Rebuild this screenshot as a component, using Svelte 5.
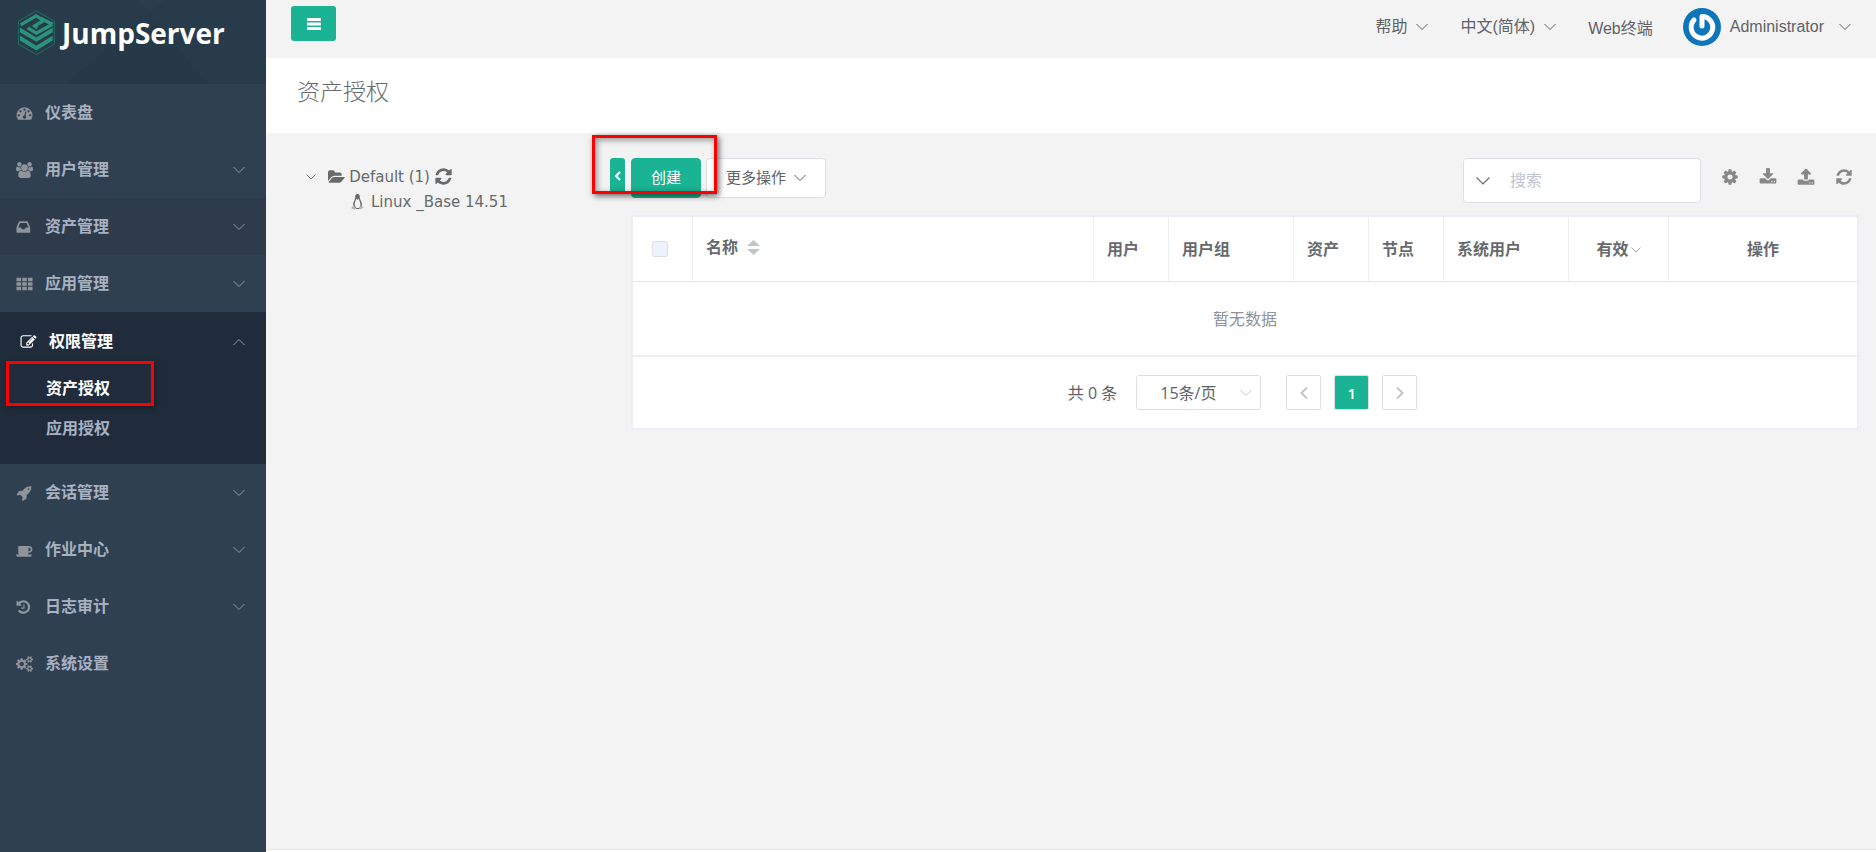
<script lang="ts">
  interface MenuItem {
    label: string;
    icon: string;
    expandable?: boolean;
    hover?: boolean;
    children?: string[];
  }

  const icons: Record<string, { w: number; d: string }> = {
    dashboard: { w: 1792, d: "M384 1152q0-53-37.5-90.5t-90.5-37.5-90.5 37.5-37.5 90.5 37.5 90.5 90.5 37.5 90.5-37.5 37.5-90.5zm192-448q0-53-37.5-90.5t-90.5-37.5-90.5 37.5-37.5 90.5 37.5 90.5 90.5 37.5 90.5-37.5 37.5-90.5zm428 481l101-382q6-26-7.5-48.5t-38.5-29.5-48 6.5-30 39.5l-101 382q-60 5-107 43.5t-63 98.5q-20 77 20 146t117 89 146-20 89-117q16-60-6-117t-72-91zm660-33q0-53-37.5-90.5t-90.5-37.5-90.5 37.5-37.5 90.5 37.5 90.5 90.5 37.5 90.5-37.5 37.5-90.5zm-640-640q0-53-37.5-90.5t-90.5-37.5-90.5 37.5-37.5 90.5 37.5 90.5 90.5 37.5 90.5-37.5 37.5-90.5zm448 192q0-53-37.5-90.5t-90.5-37.5-90.5 37.5-37.5 90.5 37.5 90.5 90.5 37.5 90.5-37.5 37.5-90.5zm320 448q0 261-141 483-19 29-54 29h-1402q-35 0-54-29-141-221-141-483 0-182 71-348t191-286 286-191 348-71 348 71 286 191 191 286 71 348z" },
    users: { w: 1920, d: "M593 896q-162 5-265 128h-134q-82 0-138-40.5t-56-118.5q0-353 124-353 6 0 43.5 21t97.5 42.5 119 21.5q67 0 133-23-5 37-5 66 0 139 81 256zm1071 637q0 120-73 189.5t-194 69.5h-874q-121 0-194-69.5t-73-189.5q0-53 3.5-103.5t14-109 26.5-108.5 43-97.5 62-81 85.5-53.5 111.5-20q10 0 43 21.5t73 48 107 48 135 21.5 135-21.5 107-48 73-48 43-21.5q61 0 111.5 20t85.5 53.5 62 81 43 97.5 26.5 108.5 14 109 3.5 103.5zm-1024-1277q0 106-75 181t-181 75-181-75-75-181 75-181 181-75 181 75 75 181zm704 384q0 159-112.5 271.5t-271.5 112.5-271.5-112.5-112.5-271.5 112.5-271.5 271.5-112.5 271.5 112.5 112.5 271.5zm576 225q0 78-56 118.5t-138 40.5h-134q-103-123-265-128 81-117 81-256 0-29-5-66 66 23 133 23 59 0 119-21.5t97.5-42.5 43.5-21q124 0 124 353zm-128-609q0 106-75 181t-181 75-181-75-75-181 75-181 181-75 181 75 75 181z" },
    inbox: { w: 1792, d: "M1023 960h316q-1-3-2.5-8t-2.5-8l-212-496h-708l-212 496q-1 2-2.5 8t-2.5 8h316l95 192h320zm513 30v482q0 26-19 45t-45 19h-1408q-26 0-45-19t-19-45v-482q0-62 25-123l238-552q10-25 36.5-42t52.5-17h832q26 0 52.5 17t36.5 42l238 552q25 61 25 123z" },
    grid: { w: 1792, d: "M0 192h512v384H0zM640 192h512v384H640zM1280 192h512v384h-512zM0 704h512v384H0zM640 704h512v384H640zM1280 704h512v384h-512zM0 1216h512v384H0zM640 1216h512v384H640zM1280 1216h512v384h-512z" },
    edit: { w: 1792, d: "M888 1184l116-116-152-152-116 116v56h96v96h56zm440-720q-16-16-33 1l-350 350q-17 17-1 33t33-1l350-350q17-17 1-33zm80 594v190q0 119-84.5 203.5t-203.5 84.5h-832q-119 0-203.5-84.5t-84.5-203.5v-832q0-119 84.5-203.5t203.5-84.5h832q63 0 117 25 15 7 18 23 3 17-9 29l-49 49q-14 14-32 8-23-6-45-6h-832q-66 0-113 47t-47 113v832q0 66 47 113t113 47h832q66 0 113-47t47-113v-126q0-13 9-22l64-64q15-15 35-7t20 29zm-96-738l288 288-672 672h-288v-288zm444 132l-92 92-288-288 92-92q28-28 68-28t68 28l152 152q28 28 28 68t-28 68z" },
    rocket: { w: 1792, d: "M1440 448q0-40-28-68t-68-28-68 28-28 68 28 68 68 28 68-28 28-68zm224-288q0 249-75.5 430.5t-253.5 360.5q-81 80-195 176l-20 379q-2 16-16 26l-384 224q-7 4-16 4-12 0-23-9l-64-64q-13-14-8-32l85-276-281-281-276 85q-3 1-9 1-14 0-23-9l-64-64q-17-19-5-39l224-384q10-14 26-16l379-20q96-114 176-195 188-187 358-258t431-71q14 0 24 9.5t10 22.5z" },
    coffee: { w: 1920, d: "M1664 832q0-80-56-136t-136-56h-64v384h64q80 0 136-56t56-136zm-1664 576h1792q0 106-75 181t-181 75h-1280q-106 0-181-75t-75-181zm1856-576q0 159-112.5 271.5t-271.5 112.5h-64v32q0 92-66 158t-158 66h-704q-92 0-158-66t-66-158v-736q0-26 19-45t45-19h1152q159 0 271.5 112.5t112.5 271.5z" },
    history: { w: 1792, d: "M1536 896q0 156-61 298t-164 245-245 164-298 61q-172 0-327-72.5t-264-204.5q-7-10-6.5-22.5t8.5-20.5l137-138q10-9 25-9 16 2 23 12 73 95 179 147t225 52q104 0 198.5-40.5t163.5-109.5 109.5-163.5 40.5-198.5-40.5-198.5-109.5-163.5-163.5-109.5-198.5-40.5q-98 0-188 35.5t-160 101.5l137 138q31 30 14 69-17 40-59 40h-448q-26 0-45-19t-19-45v-448q0-42 40-59 39-17 69 14l130 129q107-101 244.5-156.5t284.5-55.5q156 0 298 61t245 164 164 245 61 298zm-640-288v448q0 14-9 23t-23 9h-320q-14 0-23-9t-9-23v-64q0-14 9-23t23-9h224v-352q0-14 9-23t23-9h64q14 0 23 9t9 23z" },
    cogs: { w: 1920, d: "M896 896q0-106-75-181t-181-75-181 75-75 181 75 181 181 75 181-75 75-181zm768 512q0-52-38-90t-90-38-90 38-38 90q0 53 37.5 90.5t90.5 37.5 90.5-37.5 37.5-90.5zm0-1024q0-52-38-90t-90-38-90 38-38 90q0 53 37.5 90.5t90.5 37.5 90.5-37.5 37.5-90.5zm-384 421v185q0 10-7 19.5t-16 10.5l-155 24q-11 35-32 76 34 48 90 115 7 10 7 20 0 12-7 19-23 30-82.5 89.5t-78.5 59.5q-11 0-21-7l-115-90q-37 19-77 31-11 108-23 155-7 24-30 24h-186q-11 0-20-7.5t-10-17.5l-23-153q-34-10-75-31l-118 89q-7 7-20 7-11 0-21-8-144-133-144-160 0-9 7-19 10-14 41-53t47-61q-23-44-35-82l-152-24q-10-1-17-9.5t-7-19.5v-185q0-10 7-19.5t16-10.5l155-24q11-35 32-76-34-48-90-115-7-11-7-20 0-12 7-20 22-30 82-89t79-59q11 0 21 7l115 90q34-18 77-32 11-108 23-154 7-24 30-24h186q11 0 20 7.5t10 17.5l23 153q34 10 75 31l118-89q8-7 20-7 11 0 21 8 144 133 144 160 0 9-7 19-12 16-42 54t-45 60q23 48 34 82l152 23q10 2 17 10.5t7 19.5zm640 533v140q0 16-149 31-12 27-30 52 51 113 51 138 0 4-4 7-122 71-124 71-8 0-46-47t-52-68q-20 2-30 2t-30-2q-14 21-52 68t-46 47q-2 0-124-71-4-3-4-7 0-25 51-138-18-25-30-52-149-15-149-31v-140q0-16 149-31 13-29 30-52-51-113-51-138 0-4 4-7 4-2 35-20t59-34 30-16q8 0 46 46.5t52 67.5q20-2 30-2t30 2q51-71 92-112l6-2q4 0 124 70 4 3 4 7 0 25-51 138 17 23 30 52 149 15 149 31zm0-1024v140q0 16-149 31-12 27-30 52 51 113 51 138 0 4-4 7-122 71-124 71-8 0-46-47t-52-68q-20 2-30 2t-30-2q-14 21-52 68t-46 47q-2 0-124-71-4-3-4-7 0-25 51-138-18-25-30-52-149-15-149-31v-140q0-16 149-31 13-29 30-52-51-113-51-138 0-4 4-7 4-2 35-20t59-34 30-16q8 0 46 46.5t52 67.5q20-2 30-2t30 2q51-71 92-112l6-2q4 0 124 70 4 3 4 7 0 25-51 138 17 23 30 52 149 15 149 31z" },
    folder: { w: 1920, d: "M1879 952q0 31-31 66l-336 396q-43 51-120.5 86.5t-143.5 35.5h-1088q-34 0-60.5-13t-26.5-43q0-31 31-66l336-396q43-51 120.5-86.5t143.5-35.5h1088q34 0 60.5 13t26.5 43zm-343-344v160h-832q-94 0-197 47.5t-164 119.5l-337 396-5 6q0-4-.5-12.5t-.5-12.5v-960q0-92 66-158t158-66h320q92 0 158 66t66 158v32h544q92 0 158 66t66 158z" },
    refresh: { w: 1792, d: "M1639 1056q0 5-1 7-64 268-268 434.5t-478 166.5q-146 0-282.5-55t-243.5-157l-129 129q-19 19-45 19t-45-19-19-45v-448q0-26 19-45t45-19h448q26 0 45 19t19 45-19 45l-137 137q71 66 161 102t187 36q134 0 250-65t186-179q11-17 53-117 8-23 30-23h192q13 0 22.5 9.5t9.5 22.5zm25-800v448q0 26-19 45t-45 19h-448q-26 0-45-19t-19-45 19-45l138-138q-148-137-349-137-134 0-250 65t-186 179q-11 17-53 117-8 23-30 23h-199q-13 0-22.5-9.5t-9.5-22.5v-7q65-268 270-434.5t480-166.5q146 0 284 55.5t245 156.5l130-129q19-19 45-19t45 19 19 45z" },
    cog: { w: 1792, d: "M1152 896q0-106-75-181t-181-75-181 75-75 181 75 181 181 75 181-75 75-181zm512-109v222q0 12-8 23t-20 13l-185 28q-19 54-39 91 35 50 107 138 10 12 10 25t-9 23q-27 37-99 108t-94 71q-12 0-26-9l-138-108q-44 23-91 38-16 136-29 186-7 28-36 28h-222q-14 0-24.5-8.5t-11.5-21.5l-28-184q-49-16-90-37l-141 107q-10 9-25 9-14 0-25-11-126-114-165-168-7-10-7-23 0-12 8-23 15-21 51-66.5t54-70.5q-27-50-41-99l-183-27q-13-2-21-12.5t-8-23.5v-222q0-12 8-23t19-13l186-28q14-46 39-92-40-57-107-138-10-12-10-24 0-10 9-23 26-36 98.5-107.5t94.5-71.5q13 0 26 10l138 107q44-23 91-38 16-136 29-186 7-28 36-28h222q14 0 24.5 8.5t11.5 21.5l28 184q49 16 90 37l142-107q9-9 24-9 13 0 25 10 129 119 165 170 7 8 7 22 0 12-8 23-15 21-51 66.5t-54 70.5q26 50 41 98l183 28q13 2 21 12.5t8 23.5z" },
    download: { w: 1792, d: "M1344 1344q0-26-19-45t-45-19-45 19-19 45 19 45 45 19 45-19 19-45zm256 0q0-26-19-45t-45-19-45 19-19 45 19 45 45 19 45-19 19-45zm128-224v320q0 40-28 68t-68 28h-1472q-40 0-68-28t-28-68v-320q0-40 28-68t68-28h465l135 136q58 56 136 56t136-56l136-136h464q40 0 68 28t28 68zm-325-569q17 41-14 70l-448 448q-18 19-45 19t-45-19l-448-448q-31-29-14-70 17-39 59-39h256v-448q0-26 19-45t45-19h256q26 0 45 19t19 45v448h256q42 0 59 39z" },
    upload: { w: 1792, d: "M1344 1472q0-26-19-45t-45-19-45 19-19 45 19 45 45 19 45-19 19-45zm256 0q0-26-19-45t-45-19-45 19-19 45 19 45 45 19 45-19 19-45zm128-224v320q0 40-28 68t-68 28h-1472q-40 0-68-28t-28-68v-320q0-40 28-68t68-28h427q21 56 70.5 92t110.5 36h256q61 0 110.5-36t70.5-92h427q40 0 68 28t28 68zm-325-648q-17 40-59 40h-256v448q0 26-19 45t-45 19h-256q-26 0-45-19t-19-45v-448h-256q-42 0-59-40-17-39 14-69l448-448q18-19 45-19t45 19l448 448q31 30 14 69z" },
  };

  const menu: MenuItem[] = [
    { label: "仪表盘", icon: "dashboard" },
    { label: "用户管理", icon: "users", expandable: true },
    { label: "资产管理", icon: "inbox", expandable: true, hover: true },
    { label: "应用管理", icon: "grid", expandable: true },
    { label: "权限管理", icon: "edit", expandable: true, children: ["资产授权", "应用授权"] },
    { label: "会话管理", icon: "rocket", expandable: true },
    { label: "作业中心", icon: "coffee", expandable: true },
    { label: "日志审计", icon: "history", expandable: true },
    { label: "系统设置", icon: "cogs" },
  ];

  const tools = [
    { icon: "cog", label: "设置" },
    { icon: "download", label: "导出" },
    { icon: "upload", label: "导入" },
    { icon: "refresh", label: "刷新" },
  ];

  let activeChild = $state("资产授权");
  let search = $state("");
  let pageSize = $state(15);
</script>

{#snippet icon(name: string)}
  <svg class="icon {name}" viewBox="0 0 {icons[name].w} 1792" aria-hidden="true"><path d={icons[name].d} /></svg>
{/snippet}

{#snippet chevron(dir: string)}
  <svg class="chevron {dir}" viewBox="0 0 12 12" aria-hidden="true"><path d="M.5 3L6 8.500 11.500 3" /></svg>
{/snippet}

<div class="app">
  <nav class="sidebar">
    <div class="logo">
      <svg class="logo-mark" viewBox="54 30 111 134" aria-hidden="true">
        <path class="hex" d="M109 32l54 31v69l-54 31-54-31V63z" />
        <path class="fill" d="M60 107l49 30 49-30v14l-49 30-49-30zM60 82l49 30 49-30v14l-49 29-49-29z" />
        <path class="line" d="M62 74l46-27 24 14-28 16 8 6M156 73l-47 26-26-16M122 54l36 19" />
      </svg>
      <span class="logo-text">JumpServer</span>
    </div>
    <ul class="menu">
      {#each menu as item}
        <li class:open={item.children} class:hover={item.hover}>
          <a class="menu-item" href="#menu">
            {@render icon(item.icon)}
            <span class="menu-label">{item.label}</span>
            {#if item.expandable}
              {@render chevron(item.children ? "up" : "down")}
            {/if}
          </a>
          {#if item.children}
            <ul class="submenu">
              {#each item.children as child}
                <li>
                  <a href="#sub" class:active={child === activeChild} onclick={() => (activeChild = child)}>{child}</a>
                </li>
              {/each}
            </ul>
          {/if}
        </li>
      {/each}
    </ul>
  </nav>

  <div class="page">
    <header class="topbar">
      <button class="hamburger" aria-label="菜单">
        <svg viewBox="0 0 14 12" aria-hidden="true"><path d="M0 0h14v3H0zM0 4.500h14v3H0zM0 9h14v3H0z" /></svg>
      </button>
      <div class="nav">
        <button class="nav-item">帮助 {@render chevron("down")}</button>
        <button class="nav-item">中文(简体) {@render chevron("down")}</button>
        <a class="nav-item terminal" href="#terminal">Web终端</a>
        <button class="nav-item user">
          <svg class="avatar" viewBox="0 0 38 38" aria-hidden="true">
            <circle cx="19" cy="19" r="19" />
            <path d="M19 18V8.500a10.800 10.800 0 1 1-8 3.500" />
          </svg>
          <span class="user-name">Administrator</span>
          {@render chevron("down")}
        </button>
      </div>
    </header>

    <div class="heading"><h1>资产授权</h1></div>

    <div class="content">
      <aside class="tree">
        <div class="node">
          {@render chevron("down")}
          {@render icon("folder")}
          <span>Default (1)</span>
          {@render icon("refresh")}
        </div>
        <div class="node leaf">
          <svg class="linux" viewBox="0 0 13 16" aria-hidden="true">
            <path class="ink" d="M6.500 0C4.500 0 4 1.500 4.200 3.500 4.300 5.500 2 8 2 11l1 1.500L5.500 15h3l2-2.500.6-1.500c0-3-2.300-5-2.300-7.500C8.900 1.500 8.500 0 6.500 0z" />
            <path class="belly" d="M5.200 4.500L6.500 6l1.300-1.500C8 6.500 9.700 8.500 9.500 11.500L8 14H5.500L3.600 11C3.600 8.500 5 6.500 5.200 4.500z" />
            <path class="feet" d="M.7 13l2-1.800L5 14.500l-1 1L.7 15zM12.300 13l-2-1.800L8.300 14l.5 1.500 3.500-1.500z" />
          </svg>
          <span>Linux _Base 14.51</span>
        </div>
      </aside>

      <main class="main">
        <button class="collapse" aria-label="收起">
          <svg viewBox="0 0 6 10" aria-hidden="true"><path d="M5 1L1 5l4 4" /></svg>
        </button>
        <div class="list">
          <div class="toolbar">
            <div class="actions">
              <button class="btn primary">创建</button>
              <button class="btn">更多操作 {@render chevron("down")}</button>
            </div>
            <div class="search">
              {@render chevron("down")}
              <input type="text" placeholder="搜索" aria-label="搜索" bind:value={search} />
            </div>
            <div class="tools">
              {#each tools as tool}
                <button class="tool" aria-label={tool.label}>{@render icon(tool.icon)}</button>
              {/each}
            </div>
          </div>

          <div class="card">
            <table>
              <thead>
                <tr>
                  <th class="w-check"><input type="checkbox" aria-label="全选" /></th>
                  <th>
                    <span class="sortable">
                      名称
                      <svg class="sort" viewBox="0 0 13 16" aria-hidden="true"><path d="M6.500 0L13 6H0zM0 9h13l-6.500 6z" /></svg>
                    </span>
                  </th>
                  <th class="w-sm">用户</th>
                  <th class="w-md">用户组</th>
                  <th class="w-sm">资产</th>
                  <th class="w-sm">节点</th>
                  <th class="w-md">系统用户</th>
                  <th class="w-valid">有效{@render chevron("down")}</th>
                  <th class="w-action">操作</th>
                </tr>
              </thead>
              <tbody>
                <tr><td colspan="9">暂无数据</td></tr>
              </tbody>
            </table>

            <div class="pagination">
              <span class="total">共 0 条</span>
              <div class="page-size">
                <select aria-label="每页条数" bind:value={pageSize}>
                  <option value={15}>15条/页</option>
                  <option value={30}>30条/页</option>
                  <option value={50}>50条/页</option>
                </select>
                {@render chevron("down")}
              </div>
              <div class="pager">
                <button class="pager-btn" aria-label="上一页">{@render chevron("left")}</button>
                <button class="pager-btn current">1</button>
                <button class="pager-btn" aria-label="下一页">{@render chevron("right")}</button>
              </div>
            </div>
          </div>
        </div>
        <div class="highlight"></div>
      </main>
    </div>

    <footer class="footer"></footer>
  </div>
</div>

<style>
  :global(body) {
    margin: 0;
    background: #f3f3f3;
    color: #676a6c;
    font-family: "Liberation Sans", "Noto Sans CJK SC", sans-serif;
    font-size: 16px;
    line-height: 24px;
  }

  *,
  *::after {
    box-sizing: border-box;
  }

  ul,
  h1 {
    margin: 0;
    padding: 0;
    list-style: none;
  }

  a {
    color: inherit;
    text-decoration: none;
  }

  button,
  input,
  select {
    margin: 0;
    padding: 0;
    border: none;
    background: none;
    color: inherit;
    font: inherit;
  }

  button {
    cursor: pointer;
  }

  .icon {
    height: 16px;
    fill: currentColor;
    flex: none;
  }

  .chevron {
    width: 12px;
    height: 12px;
    fill: none;
    stroke: currentColor;
    stroke-width: 1;
    flex: none;
  }

  .chevron.up {
    transform: rotate(180deg);
  }

  .chevron.left {
    transform: rotate(90deg);
  }

  .chevron.right {
    transform: rotate(-90deg);
  }

  .app {
    display: flex;
    min-height: 100vh;
  }

  /* sidebar */
  .sidebar {
    width: 266px;
    flex: none;
    background: #2f4050;
    color: #a7b1c2;
  }

  .logo {
    display: flex;
    align-items: flex-start;
    gap: 7px;
    height: 84px;
    padding: 10px 18px;
    background:
      linear-gradient(50deg, transparent 62%, rgba(255, 255, 255, 0.01) 62%),
      linear-gradient(140deg, rgba(255, 255, 255, 0.01) 45%, transparent 45%),
      #263949;
  }

  .logo-mark {
    width: 37px;
    height: 45px;
    flex: none;
  }

  .logo-mark .hex {
    fill: none;
    stroke: #1f6f68;
    stroke-width: 3;
  }

  .logo-mark .fill {
    fill: #2a947b;
  }

  .logo-mark .line {
    fill: none;
    stroke: #2a947b;
    stroke-width: 10;
  }

  .logo-text {
    color: #fff;
    font-family: "Open Sans", sans-serif;
    font-size: 28px;
    font-weight: 700;
    line-height: 46px;
  }

  .menu-item {
    display: flex;
    align-items: center;
    height: 57px;
    padding: 0 21px 0 16px;
    font-weight: 600;
  }

  .menu-item .icon {
    width: 17px;
    height: 16px;
    margin-right: 12px;
    color: #8f949b;
  }

  .menu-item .chevron {
    color: #8f99a6;
  }

  .menu-label {
    flex: 1;
  }

  .hover {
    background: #2d3b4a;
  }

  .open {
    padding: 1px 0 17px;
    background: #202c3b;
  }

  .open .menu-item {
    padding-left: 20px;
    color: #fff;
  }

  .open .icon {
    color: #fff;
  }

  .submenu {
    display: grid;
    gap: 3px;
  }

  .submenu a {
    position: relative;
    display: block;
    padding-left: 46px;
    font-weight: 600;
    line-height: 37px;
  }

  .submenu .active {
    color: #fff;
  }

  .submenu .active::after {
    content: "";
    position: absolute;
    top: -9px;
    left: 6px;
    width: 148px;
    height: 45px;
    border: 3px solid #fb0000;
    box-shadow: 2px 2px 6px rgba(0, 0, 0, 0.3);
  }

  /* top bar */
  .page {
    display: flex;
    flex: 1;
    flex-direction: column;
    min-width: 0;
  }

  .topbar {
    display: flex;
    align-items: flex-start;
    justify-content: space-between;
    height: 58px;
    padding: 6px 25px;
  }

  .hamburger {
    display: grid;
    place-items: center;
    width: 45px;
    height: 35px;
    border-radius: 3px;
    background: #1ab394;
  }

  .hamburger svg {
    width: 14px;
    height: 12px;
    fill: #fff;
  }

  .nav {
    display: flex;
    align-items: center;
    gap: 32px;
    height: 42px;
    color: #606266;
  }

  .nav-item {
    display: flex;
    align-items: center;
    gap: 9px;
  }

  .terminal {
    padding-top: 3px;
  }

  .user-name {
    margin-right: 6px;
  }

  .user {
    margin-left: -2px;
  }

  .avatar {
    width: 38px;
    height: 38px;
  }

  .avatar circle {
    fill: #0d76bb;
  }

  .avatar path {
    fill: none;
    stroke: #fff;
    stroke-width: 5;
    stroke-linecap: round;
    stroke-linejoin: round;
  }

  .heading {
    padding: 16px 31px 23px;
    background: #fff;
  }

  h1 {
    font-size: 23px;
    font-weight: 300;
    line-height: 36px;
  }

  /* asset tree */
  .content {
    display: flex;
    flex: 1;
    align-items: flex-start;
    padding: 25px 17px 25px 40px;
  }

  .tree {
    width: 304px;
    flex: none;
    padding-top: 6px;
    font-family: "DejaVu Sans", sans-serif;
    font-size: 15px;
  }

  .node {
    display: flex;
    align-items: center;
    gap: 4px;
    height: 25px;
  }

  .node .chevron {
    width: 10px;
    margin-right: 8px;
  }

  .node .refresh {
    width: 19px;
    height: 19px;
  }

  .leaf {
    padding-left: 45px;
    gap: 7px;
  }

  .linux {
    width: 13px;
    height: 16px;
  }

  .linux .ink {
    fill: #676a6c;
  }

  .linux .belly {
    fill: #f3f3f3;
  }

  .linux .feet {
    fill: #b4b6b8;
  }

  /* list */
  .main {
    position: relative;
    display: flex;
    flex: 1;
    align-items: flex-start;
    gap: 6px;
    min-width: 0;
  }

  .collapse {
    display: grid;
    place-items: center;
    width: 15px;
    height: 35px;
    border-radius: 3px;
    background: #1ab394;
  }

  .collapse svg {
    width: 6px;
    height: 10px;
    fill: none;
    stroke: #fff;
    stroke-width: 2;
  }

  .highlight {
    position: absolute;
    top: -23px;
    left: -18px;
    width: 125px;
    height: 59px;
    border: 3px solid #fb0000;
    box-shadow:
      2px 2px 6px rgba(0, 0, 0, 0.6),
      inset 2px 2px 6px rgba(0, 0, 0, 0.4);
    pointer-events: none;
  }

  .list {
    flex: 1;
    min-width: 0;
  }

  .toolbar {
    display: flex;
    align-items: flex-start;
    margin-bottom: 12px;
  }

  .actions {
    display: flex;
    flex: 1;
    gap: 5px;
  }

  .btn {
    display: flex;
    align-items: center;
    gap: 8px;
    height: 40px;
    padding: 0 19px;
    border: 1px solid #dcdfe6;
    border-radius: 4px;
    background: #fff;
    color: #606266;
    font-size: 15px;
  }

  .btn.primary {
    border-color: #1ab394;
    background: #1ab394;
    color: #fff;
  }

  .search {
    display: flex;
    align-items: center;
    gap: 20px;
    width: 238px;
    height: 45px;
    padding: 0 12px;
    border: 1px solid #dcdfe6;
    border-radius: 4px;
    background: #fff;
  }

  .search .chevron {
    width: 14px;
    height: 14px;
  }

  .search input {
    flex: 1;
    min-width: 0;
    outline: none;
  }

  .search input::placeholder {
    color: #c0c4cc;
  }

  .tools {
    display: flex;
    gap: 20px;
    padding: 10px 6px 0 20px;
    color: #888;
  }

  .tool {
    display: flex;
  }

  .tool .icon {
    width: 18px;
    height: 18px;
  }

  .card {
    border: 2px solid #ebeef5;
    background: #fff;
  }

  table {
    width: 100%;
    border-spacing: 0;
    table-layout: fixed;
  }

  th {
    height: 65px;
    padding: 1px 13px 0;
    border-right: 1px solid #ebeef5;
    border-bottom: 1px solid #e4e7ed;
    font-weight: 600;
    text-align: left;
  }

  th:last-child {
    border-right: none;
  }

  td {
    height: 75px;
    padding: 2px 0 0;
    border-bottom: 2px solid #ebeef5;
    color: #909399;
    text-align: center;
  }

  .w-check {
    width: 60px;
    padding: 0 19px;
  }

  .w-sm {
    width: 75px;
  }

  .w-md {
    width: 125px;
  }

  .w-valid {
    width: 100px;
    text-align: center;
  }

  .w-action {
    width: 188px;
    text-align: center;
  }

  .w-valid .chevron {
    width: 10px;
    height: 10px;
    margin-left: 2px;
    color: #909399;
  }

  input[type="checkbox"] {
    display: block;
    appearance: none;
    width: 16px;
    height: 16px;
    border: 1px solid #dcdfe6;
    border-radius: 2px;
    background: #edf2fc;
  }

  .sortable {
    display: flex;
    align-items: center;
    gap: 9px;
    padding-bottom: 3px;
  }

  .sort {
    width: 13px;
    height: 16px;
    fill: #c0c4cc;
  }

  .pagination {
    display: flex;
    align-items: center;
    justify-content: center;
    padding: 18px 5px 18px 0;
    color: #606266;
    font-family: "Open Sans", "Noto Sans CJK SC", sans-serif;
  }

  .page-size {
    position: relative;
    margin: 0 25px 0 19px;
  }

  select {
    display: block;
    appearance: none;
    width: 125px;
    height: 35px;
    padding: 0 20px 0 23px;
    border: 1px solid #dcdfe6;
    border-radius: 3px;
    background: #fff;
  }

  .page-size .chevron {
    position: absolute;
    top: 12px;
    right: 9px;
    color: #c0c4cc;
    pointer-events: none;
  }

  .pager {
    display: flex;
    gap: 13px;
  }

  .pager-btn {
    display: grid;
    place-items: center;
    width: 35px;
    height: 35px;
    border: 1px solid #dcdfe6;
    border-radius: 2px;
    color: #c0c4cc;
  }

  .pager-btn .chevron {
    stroke-width: 2;
  }

  .pager-btn.current {
    background: #1ab394;
    color: #fff;
    font-size: 15px;
    font-weight: 600;
  }

  .footer {
    height: 3px;
    border-top: 1px solid #e7eaec;
    background: #fff;
  }
</style>
